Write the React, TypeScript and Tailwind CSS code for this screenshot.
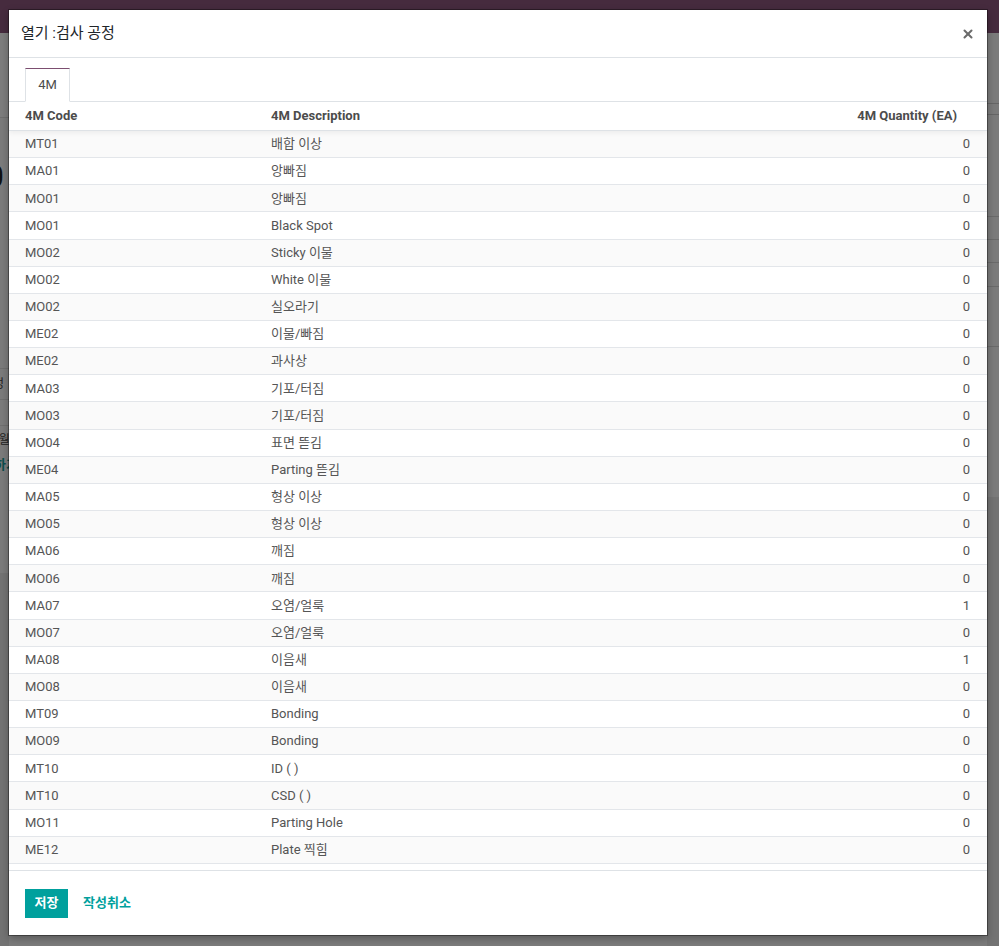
import React from 'react';
import { X } from 'lucide-react';

type Line = { code: string; desc: string; qty: number };

const lines: Line[] = [
  { code: 'MT01', desc: '배합 이상', qty: 0 },
  { code: 'MA01', desc: '앙빠짐', qty: 0 },
  { code: 'MO01', desc: '앙빠짐', qty: 0 },
  { code: 'MO01', desc: 'Black Spot', qty: 0 },
  { code: 'MO02', desc: 'Sticky 이물', qty: 0 },
  { code: 'MO02', desc: 'White 이물', qty: 0 },
  { code: 'MO02', desc: '실오라기', qty: 0 },
  { code: 'ME02', desc: '이물/빠짐', qty: 0 },
  { code: 'ME02', desc: '과사상', qty: 0 },
  { code: 'MA03', desc: '기포/터짐', qty: 0 },
  { code: 'MO03', desc: '기포/터짐', qty: 0 },
  { code: 'MO04', desc: '표면 뜯김', qty: 0 },
  { code: 'ME04', desc: 'Parting 뜯김', qty: 0 },
  { code: 'MA05', desc: '형상 이상', qty: 0 },
  { code: 'MO05', desc: '형상 이상', qty: 0 },
  { code: 'MA06', desc: '깨짐', qty: 0 },
  { code: 'MO06', desc: '깨짐', qty: 0 },
  { code: 'MA07', desc: '오염/얼룩', qty: 1 },
  { code: 'MO07', desc: '오염/얼룩', qty: 0 },
  { code: 'MA08', desc: '이음새', qty: 1 },
  { code: 'MO08', desc: '이음새', qty: 0 },
  { code: 'MT09', desc: 'Bonding', qty: 0 },
  { code: 'MO09', desc: 'Bonding', qty: 0 },
  { code: 'MT10', desc: 'ID ( )', qty: 0 },
  { code: 'MT10', desc: 'CSD ( )', qty: 0 },
  { code: 'MO11', desc: 'Parting Hole', qty: 0 },
  { code: 'ME12', desc: 'Plate 찍힘', qty: 0 },
  { code: 'ME12', desc: '찍힘', qty: 0 },
];

function Backdrop() {
  return (
    <div className="flex h-full flex-col">
      <div className="h-[33px] shrink-0 bg-[#462b3e]" />
      <div className="flex flex-1 justify-between">
        {/* left edge of the page behind the dialog */}
        <div className="flex w-[9px] flex-col overflow-hidden">
          <div className="h-[85px] shrink-0 border-b border-[#6f6f6f] bg-[#7d7d7d]" />
          <div className="h-[250px] shrink-0 pt-[42px]">
            <span className="-ml-[14px] block text-[32px] leading-none text-[#111]">0</span>
          </div>
          <div className="flex h-[32px] shrink-0 items-center border-y border-[#6f6f6f]">
            <span className="-ml-[7px] whitespace-nowrap text-[12px] text-[#222]">정</span>
          </div>
          <div className="h-[26px] shrink-0 border-b border-[#6f6f6f]" />
          <div className="h-[27px] shrink-0 pt-[5px]">
            <span className="-ml-[8px] block whitespace-nowrap text-[12px] text-[#222]">0월</span>
          </div>
          <div className="h-[120px] shrink-0 pt-[2px]">
            <span className="-ml-[6px] block whitespace-nowrap text-[13px] font-bold text-[#0b4f4d]">하기</span>
          </div>
          <div className="flex-1 bg-[#737373]" />
        </div>
        {/* right edge of the page behind the dialog */}
        <div className="flex w-[12px] flex-col">
          <div className="h-[71px] shrink-0 border-b border-[#666]" />
          <div className="h-[11px] shrink-0 border-b border-[#666]" />
          <div className="h-[102px] shrink-0 border-b border-[#6a6a6a]" />
          <div className="h-[23px] shrink-0 border-b border-[#6a6a6a]" />
          <div className="h-[23px] shrink-0 border-b border-[#6a6a6a]" />
          <div className="h-[24px] shrink-0 border-b border-[#6a6a6a]" />
          <div className="h-[60px] shrink-0 border-b border-[#6a6a6a]" />
          <div className="h-[150px] shrink-0" />
          <div className="flex-1 bg-[#737373]" />
        </div>
      </div>
    </div>
  );
}

export default function App() {
  return (
    <div
      className="relative h-[946px] w-[999px] overflow-hidden bg-[#7b7b7b]"
      style={{ fontFamily: 'Roboto, "Noto Sans CJK KR", sans-serif' }}
    >
      <Backdrop />

      <div className="absolute left-[9px] top-[10px] flex h-[925px] w-[978px] flex-col bg-white shadow-[0_0_0_1px_rgba(0,0,0,0.35),0_3px_8px_rgba(0,0,0,0.3)]">
        <header className="flex h-[48px] shrink-0 items-center justify-between border-b border-[#dee2e6] pl-[12px] pr-[12px]">
          <h4 className="text-[15px] text-[#212529]">열기 :검사 공정</h4>
          <button className="text-[#6b6b6b]">
            <X size={14} strokeWidth={3.5} />
          </button>
        </header>

        <div className="shrink-0 border-b border-[#dee2e6] px-[16px] pt-[10px]">
          <div className="-mb-px inline-flex h-[34px] w-[45px] items-center justify-center border border-b-white border-[#dee2e6] border-t-[#7c4e70] bg-white text-[13px] text-[#4c4c4c]">
            4M
          </div>
        </div>

        <div className="min-h-0 flex-1 overflow-hidden">
          <div className="relative z-10 grid h-[29px] grid-cols-[246px_1fr_220px] items-center border-b border-[#dee2e6] bg-white text-[13px] font-bold text-[#4c4c4c] shadow-[0_2px_5px_rgba(0,0,0,0.06)]">
            <div className="pl-[16px]">4M Code</div>
            <div className="pl-[16px]">4M Description</div>
            <div className="pr-[30px] text-right">4M Quantity (EA)</div>
          </div>
          {lines.map((l, i) => (
            <div
              key={i}
              className={`grid h-[27.15px] grid-cols-[246px_1fr_220px] items-center border-b border-[#e3e6ea] text-[13px] text-[#555] ${
                i % 2 === 0 ? 'bg-[#fafafa]' : 'bg-white'
              }`}
            >
              <div className="pl-[16px]">{l.code}</div>
              <div className="pl-[16px]">{l.desc}</div>
              <div className="pr-[17px] text-right">{l.qty}</div>
            </div>
          ))}
        </div>

        <footer className="flex h-[65px] shrink-0 items-center gap-[15px] border-t border-[#dee2e6] px-[16px]">
          <button className="h-[29px] w-[43px] bg-[#00a09d] text-[13px] font-bold text-white">저장</button>
          <button className="text-[13px] font-bold text-[#00a09d]">작성취소</button>
        </footer>
      </div>
    </div>
  );
}
